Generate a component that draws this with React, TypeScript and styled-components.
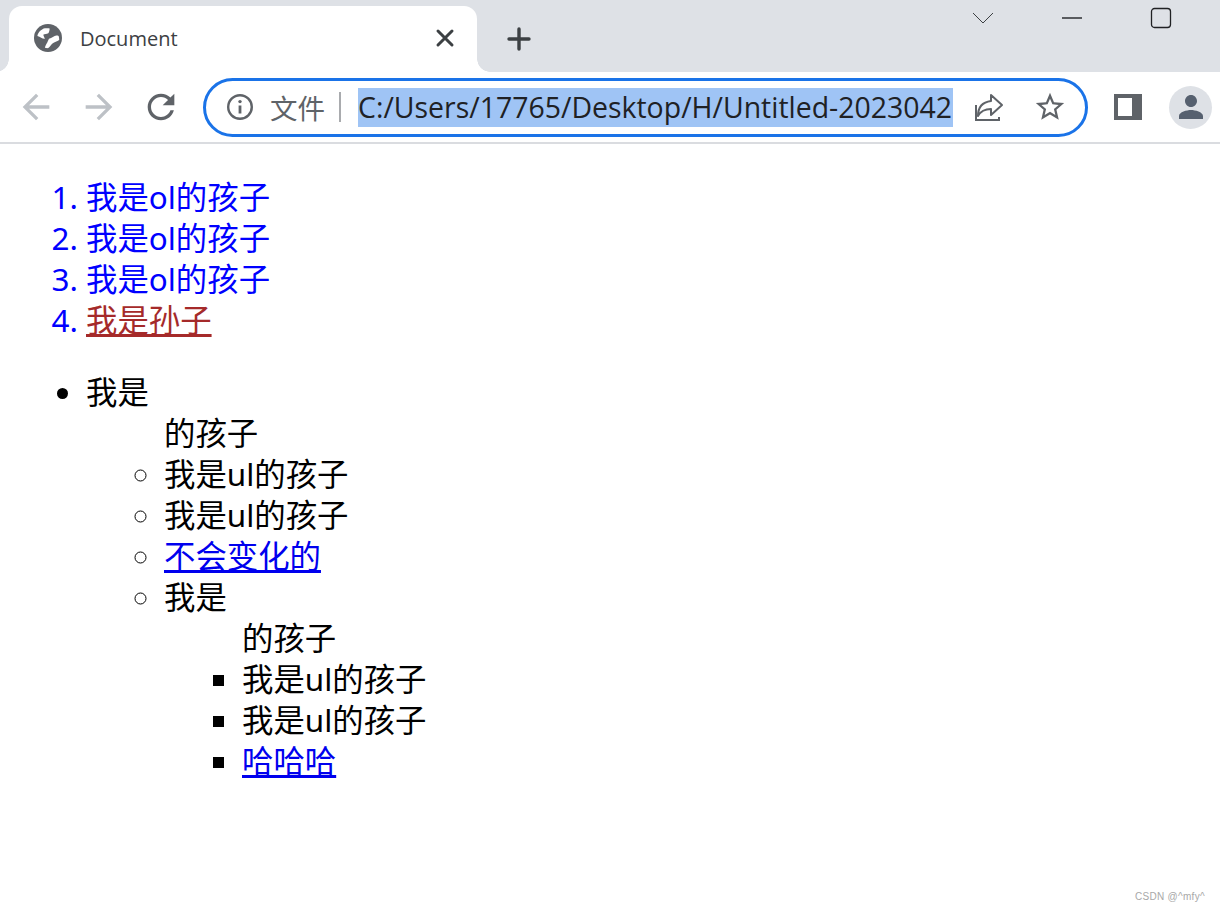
import React from "react";
import styled, { createGlobalStyle } from "styled-components";

const GlobalStyle = createGlobalStyle`
  html, body {
    margin: 0;
    padding: 0;
    background: #fff;
  }
  body {
    font-family: "Open Sans", "Noto Sans CJK SC", sans-serif;
  }
`;

const Window = styled.div`
  position: relative;
  width: 1220px;
  height: 910px;
  overflow: hidden;
  background: #fff;
`;

const TabStrip = styled.div`
  display: flex;
  align-items: flex-end;
  height: 72px;
  padding-left: 9px;
  background: #dee1e6;
  box-sizing: border-box;
`;

const Tab = styled.div`
  position: relative;
  display: flex;
  align-items: center;
  width: 468px;
  height: 66px;
  padding: 0 22px 2px 25px;
  box-sizing: border-box;
  background: #fff;
  border-radius: 13px 13px 0 0;

  &::before,
  &::after {
    content: "";
    position: absolute;
    bottom: 0;
    width: 13px;
    height: 13px;
  }
  &::before {
    left: -13px;
    background: radial-gradient(circle at 0 0, #dee1e6 12.5px, #fff 13px);
  }
  &::after {
    right: -13px;
    background: radial-gradient(circle at 100% 0, #dee1e6 12.5px, #fff 13px);
  }
`;

const TabTitle = styled.span`
  flex: 1;
  margin-left: 18px;
  font-family: "Open Sans", sans-serif;
  font-size: 20px;
  color: #3c4043;
`;

const NewTab = styled.div`
  display: flex;
  align-items: center;
  justify-content: center;
  width: 30px;
  height: 30px;
  margin: 0 0 18px 27px;
`;

const WindowControls = styled.div`
  display: flex;
  align-items: center;
  align-self: flex-start;
  gap: 67px;
  height: 36px;
  margin-left: auto;
  padding-right: 48px;
`;

const Toolbar = styled.div`
  display: flex;
  align-items: center;
  height: 72px;
  padding: 0 8px 0 16px;
  box-sizing: border-box;
  background: #fff;
  border-bottom: 2px solid #dadce0;
`;

const NavButtons = styled.div`
  display: flex;
  align-items: center;
  gap: 22.5px;
  margin-right: 22px;
`;

const AddressBar = styled.div`
  display: flex;
  align-items: center;
  flex-shrink: 0;
  width: 885px;
  height: 59px;
  padding: 0 10px 0 20px;
  box-sizing: border-box;
  border: 3px solid #1a73e8;
  border-radius: 30px;
  background: #fff;
`;

const SecureLabel = styled.span`
  flex-shrink: 0;
  margin-left: 16px;
  font-family: "Noto Sans CJK SC", sans-serif;
  font-size: 27.5px;
  line-height: 36px;
  white-space: nowrap;
  color: #5f6368;
`;

const Divider = styled.span`
  flex-shrink: 0;
  width: 2px;
  height: 30px;
  margin: 0 17px 0 14px;
  background: #a9abae;
`;

const Url = styled.span`
  flex-shrink: 0;
  width: 595px;
  height: 39px;
  overflow: hidden;
  white-space: nowrap;
  font-family: "Open Sans", sans-serif;
  font-size: 28.45px;
  line-height: 39px;
  color: #202124;
  background: #9fc4f5;
`;

const BarActions = styled.div`
  display: flex;
  align-items: center;
  gap: 29px;
  margin-left: 19px;
`;

const ToolActions = styled.div`
  display: flex;
  align-items: center;
  gap: 27px;
  margin-left: 26px;
`;

const Avatar = styled.div`
  display: flex;
  align-items: center;
  justify-content: center;
  width: 43px;
  height: 43px;
  border-radius: 50%;
  background: #dee1e6;
`;

const Content = styled.main`
  padding: 32px 0 0 8px;
  font-family: "Noto Sans", "Noto Sans CJK SC", sans-serif;
  font-size: 31.4px;
  line-height: 41px;
  color: #000;
`;

const OrderedList = styled.ol`
  margin: 0 0 31px;
  padding-left: 78px;
  color: #0000ff;
`;

const BulletList = styled.ul<{ $marker: "disc" | "circle" | "square" }>`
  margin: 0;
  padding-left: 78px;
  list-style-type: ${(props) => props.$marker};
`;

const PlainLink = styled.a`
  color: #0000ee;
  text-decoration: underline;
`;

const GrandchildLink = styled.a`
  color: #a52a2a;
  text-decoration: underline;
`;

const Watermark = styled.div`
  position: absolute;
  right: 15px;
  bottom: 8px;
  font-family: "Liberation Sans", sans-serif;
  font-size: 10px;
  letter-spacing: 0.3px;
  color: #a8a8a8;
`;

const GlobeIcon = () => (
  <svg width="28" height="28" viewBox="2 2 20 20">
    <circle cx="12" cy="12" r="10" fill="#5f6368" />
    <path
      fill="#fff"
      d="M4.400 10.500C5.200 7.600 7.400 5.600 9.800 5.100c1.300-.2 2.600-.2 3.400.1-.1 1.500-.4 2.800-1 3.400-1.200.5-2.500.4-3.600 1 .2 1 .8 1.900 1.200 2.900-1.800.2-3.200-1.300-5.400-2z"
    />
    <path
      fill="#fff"
      d="M12.700 12.500c2.100-.3 3.600-2 5.300-2.200.6 0 1.100.1 1.600.2.300 1 .4 2 .4 3-1.600 1.100-3.300 1.400-4.800 2.400-1 1-1.800 2.300-3 3.300-.8.100-1.600 0-2.400-.2.300-1.400 1-2.700 1.600-3.600.5-1 .7-1.900 1.300-2.900z"
    />
  </svg>
);

const CloseIcon = () => (
  <svg width="20" height="20" viewBox="0 0 20 20" stroke="#3c4043" strokeWidth="3" strokeLinecap="round">
    <path d="M3 3l14 14M17 3L3 17" />
  </svg>
);

const PlusIcon = () => (
  <svg width="26" height="26" viewBox="0 0 26 26" stroke="#3c4043" strokeWidth="3.4" strokeLinecap="round">
    <path d="M13 3v20M3 13h20" />
  </svg>
);

const ChevronIcon = () => (
  <svg width="22" height="14" viewBox="0 0 22 14" fill="none" stroke="#3c4043" strokeWidth="1">
    <path d="M1 2l10 10L21 2" />
  </svg>
);

const MinimizeIcon = () => (
  <svg width="22" height="2" viewBox="0 0 22 2" stroke="#202124" strokeWidth="1.4">
    <path d="M1 1h20" />
  </svg>
);

const MaximizeIcon = () => (
  <svg width="22" height="22" viewBox="0 0 22 22" fill="none" stroke="#202124" strokeWidth="1.3">
    <rect x="1.5" y="1.5" width="19" height="19" rx="3" />
  </svg>
);

const ArrowIcon = ({ flip }: { flip?: boolean }) => (
  <svg
    width="40"
    height="40"
    viewBox="0 0 24 24"
    fill="#bdc1c6"
    style={flip ? { transform: "scaleX(-1)" } : undefined}
  >
    <path d="M20 11H7.83l5.59-5.59L12 4l-8 8 8 8 1.41-1.41L7.83 13H20v-2z" />
  </svg>
);

const ReloadIcon = () => (
  <svg width="40" height="40" viewBox="0 0 24 24" fill="#5f6368">
    <path d="M17.65 6.35C16.2 4.9 14.21 4 12 4c-4.42 0-7.99 3.58-7.99 8s3.57 8 7.99 8c3.73 0 6.84-2.55 7.73-6h-2.08c-.82 2.33-3.04 4-5.65 4-3.31 0-6-2.69-6-6s2.69-6 6-6c1.66 0 3.14.69 4.22 1.78L13 11h7V4l-2.35 2.35z" />
  </svg>
);

const InfoIcon = () => (
  <svg width="28" height="28" viewBox="0 0 28 28" fill="none" stroke="#5f6368" strokeWidth="2.4">
    <circle cx="14" cy="14" r="11.8" />
    <path d="M14 12.5v8" strokeWidth="2.8" />
    <circle cx="14" cy="8.6" r="1.7" fill="#5f6368" stroke="none" />
  </svg>
);

const ShareIcon = () => (
  <svg width="32" height="32" viewBox="0 0 32 32" fill="none" stroke="#5f6368" strokeWidth="2">
    <path d="M4 14v15h23v-3" />
    <path d="M19 4l11 10-11 10v-6c-6 0-10 1.500-13 7 0-9 5-14 13-15z" strokeLinejoin="round" />
  </svg>
);

const StarIcon = () => (
  <svg width="34" height="34" viewBox="0 0 24 24" fill="#5f6368">
    <path d="M22 9.24l-7.19-.62L12 2 9.19 8.63 2 9.24l5.46 4.73L5.82 21 12 17.27 18.18 21l-1.63-7.03L22 9.24zM12 15.4l-3.76 2.27 1-4.28-3.32-2.88 4.38-.38L12 6.1l1.71 4.04 4.38.38-3.32 2.88 1 4.28L12 15.4z" />
  </svg>
);

const SidePanelIcon = () => (
  <svg width="28" height="28" viewBox="0 0 28 28">
    <path fill="#5f6368" fillRule="evenodd" d="M0 1h28v26H0zM4 5v18h14V5z" />
  </svg>
);

const PersonIcon = () => (
  <svg width="36" height="36" viewBox="0 0 24 24" fill="#56606f">
    <path d="M12 12c2.210 0 4-1.790 4-4s-1.790-4-4-4-4 1.790-4 4 1.790 4 4 4zm0 2c-2.670 0-8 1.340-8 4v2h16v-2c0-2.660-5.330-4-8-4z" />
  </svg>
);

export default function App() {
  return (
    <Window>
      <GlobalStyle />
      <TabStrip>
        <Tab>
          <GlobeIcon />
          <TabTitle>Document</TabTitle>
          <CloseIcon />
        </Tab>
        <NewTab>
          <PlusIcon />
        </NewTab>
        <WindowControls>
          <ChevronIcon />
          <MinimizeIcon />
          <MaximizeIcon />
        </WindowControls>
      </TabStrip>
      <Toolbar>
        <NavButtons>
          <ArrowIcon />
          <ArrowIcon flip />
          <ReloadIcon />
        </NavButtons>
        <AddressBar>
          <InfoIcon />
          <SecureLabel>文件</SecureLabel>
          <Divider />
          <Url>C:/Users/17765/Desktop/H/Untitled-2023042</Url>
          <BarActions>
            <ShareIcon />
            <StarIcon />
          </BarActions>
        </AddressBar>
        <ToolActions>
          <SidePanelIcon />
          <Avatar>
            <PersonIcon />
          </Avatar>
        </ToolActions>
      </Toolbar>
      <Content>
        <OrderedList>
          <li>我是ol的孩子</li>
          <li>我是ol的孩子</li>
          <li>我是ol的孩子</li>
          <li>
            <GrandchildLink href="#">我是孙子</GrandchildLink>
          </li>
        </OrderedList>
        <BulletList $marker="disc">
          <li>
            我是
            <BulletList $marker="circle">
              的孩子
              <li>我是ul的孩子</li>
              <li>我是ul的孩子</li>
              <li>
                <PlainLink href="#">不会变化的</PlainLink>
              </li>
              <li>
                我是
                <BulletList $marker="square">
                  的孩子
                  <li>我是ul的孩子</li>
                  <li>我是ul的孩子</li>
                  <li>
                    <PlainLink href="#">哈哈哈</PlainLink>
                  </li>
                </BulletList>
              </li>
            </BulletList>
          </li>
        </BulletList>
      </Content>
      <Watermark>CSDN @^mfy^</Watermark>
    </Window>
  );
}
